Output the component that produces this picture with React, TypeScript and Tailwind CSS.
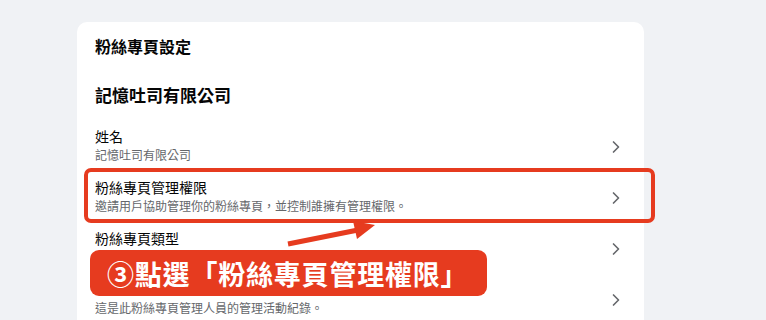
import { ChevronRight } from "lucide-react";

const rows = [
  { title: "姓名", sub: "記憶吐司有限公司" },
  { title: "粉絲專頁管理權限", sub: "邀請用戶協助管理你的粉絲專頁，並控制誰擁有管理權限。" },
  { title: "粉絲專頁類型", sub: "" },
  { title: "", sub: "這是此粉絲專頁管理人員的管理活動紀錄。" },
];

export default function App() {
  return (
    <main
      className="h-[320px] w-[766px] overflow-hidden bg-[#f0f2f5] pt-[22px] pl-[77px]"
      style={{ fontFamily: '"Noto Sans CJK TC", "Noto Sans", sans-serif' }}
    >
      <section className="relative h-[400px] w-[567px] rounded-[10px] bg-white pt-[13px]">
        <h2 className="px-[18px] text-[16px] leading-[22px] font-bold text-[#050505]">粉絲專頁設定</h2>
        <h3 className="mt-[26px] px-[18px] text-[17px] leading-[24px] font-bold text-[#050505]">記憶吐司有限公司</h3>

        <div className="mt-[12px]">
          {rows.map((r, i) => (
            <div key={i} className="flex h-[51px] items-center justify-between pr-[18px] pl-[18px]">
              <div className="flex flex-col">
                <span className="text-[14px] leading-[20px] text-[#050505]">{r.title || "\u00a0"}</span>
                <span className="text-[12px] leading-[17px] text-[#65676b]">{r.sub || "\u00a0"}</span>
              </div>
              <ChevronRight className="mt-[4px] h-[20px] w-[20px] text-[#65676b]" strokeWidth={2} />
            </div>
          ))}
        </div>

        {/* highlight box */}
        <div className="pointer-events-none absolute top-[146px] left-[7px] h-[55px] w-[571px] rounded-[7px] border-[4px] border-[#e63b1f]" />

        {/* arrow */}
        <svg className="absolute top-[198px] left-[206px]" width="100" height="30" viewBox="0 0 100 30">
          <line x1="5" y1="24" x2="80" y2="9" stroke="#e63b1f" strokeWidth="5" />
          <polygon points="70,1 92,5 74,19" fill="#e63b1f" />
        </svg>

        {/* callout label */}
        <div className="absolute top-[228px] left-[13px] flex h-[46px] w-[397px] items-center rounded-[9px] bg-[#e63b1f] pl-[17px]">
          <span className="text-[27px] leading-none font-bold tracking-[0.8px] text-white">③點選「粉絲專頁管理權限」</span>
        </div>
      </section>
    </main>
  );
}
